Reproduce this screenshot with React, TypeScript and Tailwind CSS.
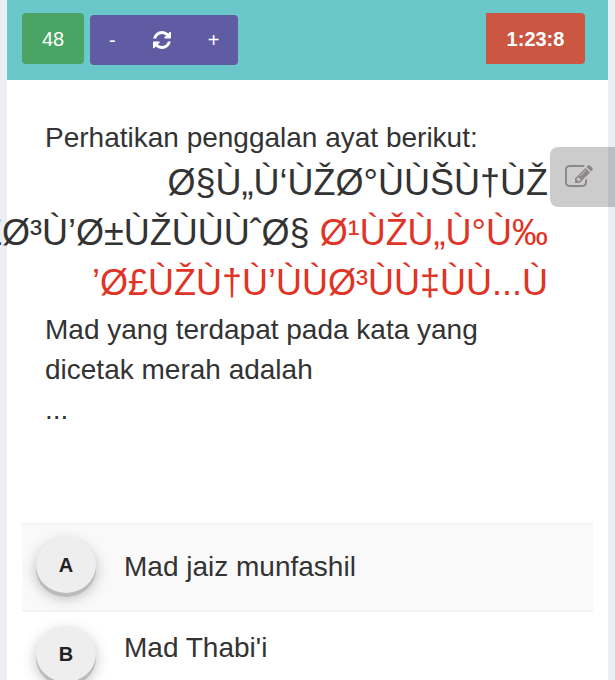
import { useState } from "react";

// Answer choices shown under the question
interface Option {
  key: string;
  text: string;
}

const options: Option[] = [
  { key: "A", text: "Mad jaiz munfashil" },
  { key: "B", text: "Mad Thabi'i" },
];

const RefreshIcon = () => (
  <svg viewBox="0 0 1536 1536" className="h-[18px] w-[18px]" fill="currentColor" aria-hidden="true">
    <path d="M1511 928q0 5-1 7-64 268-268 434.5t-478 166.5q-146 0-282.5-55t-243.5-157l-129 129q-19 19-45 19t-45-19-19-45v-448q0-26 19-45t45-19h448q26 0 45 19t19 45-19 45l-137 137q71 66 161 102t187 36q134 0 250-65t186-179q11-17 53-117 8-23 30-23h192q13 0 22.5 9.5t9.5 22.5zm25-800v448q0 26-19 45t-45 19h-448q-26 0-45-19t-19-45 19-45l138-138q-148-137-349-137-134 0-250 65t-186 179q-11 17-53 117-8 23-30 23h-199q-13 0-22.5-9.5t-9.5-22.5v-7q65-268 270-434.5t480-166.5q146 0 284 55.5t245 156.5l130-129q19-19 45-19t45 19 19 45z" />
  </svg>
);

const EditIcon = () => (
  <svg viewBox="0 0 1792 1792" className="h-7 w-7" fill="currentColor" aria-hidden="true">
    <path d="M888 1184l116-116-152-152-116 116v56h96v96h56zm440-720q-16-16-33 1l-350 350q-17 17-1 33t33-1l350-350q17-17 1-33zm80 594v190q0 119-84.5 203.5t-203.5 84.5h-832q-119 0-203.5-84.5t-84.5-203.5v-832q0-119 84.5-203.5t203.5-84.5h832q63 0 117 25 15 7 18 23 3 17-9 29l-49 49q-14 14-32 8-23-6-45-6h-832q-66 0-113 47t-47 113v832q0 66 47 113t113 47h832q66 0 113-47t47-113v-126q0-13 9-22l64-64q15-15 35-7t20 29zm-96-738l288 288-672 672h-288v-288zm444 132l-92 92-288-288 92-92q28-28 68-28t68 28l152 152q28 28 28 68t-28 68z" />
  </svg>
);

const Toolbar = () => (
  <header className="flex h-20 items-start justify-between bg-[#6ac8ca] pt-[13px] pr-[23px] pl-[15px] text-xl text-white">
    <div className="flex gap-1.5">
      <span className="flex h-[51px] w-[62px] items-center justify-center rounded bg-[#4aa564]">48</span>
      <div className="mt-0.5 flex h-[50px] rounded bg-[#605ca3]">
        <button type="button" aria-label="Smaller text" className="px-[19px]">
          -
        </button>
        <button type="button" aria-label="Reset text size" className="px-[18px]">
          <RefreshIcon />
        </button>
        <button type="button" aria-label="Larger text" className="px-[19px]">
          +
        </button>
      </div>
    </div>
    <span className="flex h-[51px] w-[99px] items-center justify-center rounded-r bg-[#cb5642] font-bold">
      1:23:8
    </span>
  </header>
);

const Question = () => (
  <section className="pt-[38px] pr-[60px] pl-[38px] text-[28px] leading-10">
    <p>Perhatikan penggalan ayat berikut:</p>
    {/* The verse is right aligned and runs off the left side when too long */}
    <div className="mb-0.5 text-4xl leading-[50px] whitespace-nowrap">
      <p className="flex justify-end">Ø§Ù„Ù‘ÙŽØ°ÙÙŠÙ†ÙŽ</p>
      <p className="flex justify-end">
        <span className="whitespace-pre">
          ŽØ³Ù’Ø±ÙŽÙÙÙˆØ§ <span className="text-[#e03426]">Ø¹ÙŽÙ„Ù°Ù‰</span>
        </span>
      </p>
      <p className="flex justify-end text-[#e03426]">’Ø£ÙŽÙ†Ù’ÙÙØ³ÙÙ‡ÙÙ...Ù</p>
    </div>
    <p className="max-w-[460px]">Mad yang terdapat pada kata yang dicetak merah adalah</p>
    <p>...</p>
  </section>
);

export default function App() {
  const [answer, setAnswer] = useState("");

  return (
    <div className="h-screen overflow-hidden bg-[#eceef4] pr-[7px] pl-[7px] font-['Liberation_Sans',Arial,sans-serif] text-[#333]">
      <main className="min-h-full bg-white">
        <Toolbar />
        <Question />

        {/* Answers */}
        <div role="radiogroup" aria-label="Jawaban" className="mt-[93px] mr-[15px] ml-[15px]">
          {options.map((option) => (
            <label
              key={option.key}
              className="group flex h-[89px] cursor-pointer items-start gap-7 px-3.5 pt-3.5 odd:border-y-2 odd:border-[#f3f3f3] odd:bg-[#f9f9f9] odd:pt-3"
            >
              <input
                type="radio"
                name="answer"
                value={option.key}
                checked={answer === option.key}
                onChange={() => setAnswer(option.key)}
                className="peer sr-only"
              />
              <span className="flex h-14 w-[60px] shrink-0 items-center justify-center rounded-[50%] bg-[#eee] text-xl font-bold text-[#222] shadow-[0_4px_0_#bbb,0_5px_14px_rgba(0,0,0,0.25)] peer-checked:bg-[#4aa564] peer-checked:text-white">
                {option.key}
              </span>
              <span className="pt-0.5 text-[28px] leading-10 group-odd:pt-2.5">{option.text}</span>
            </label>
          ))}
        </div>
      </main>

      {/* Notes tab that floats over the page edge */}
      <button
        type="button"
        aria-label="Notes"
        className="absolute top-[147px] right-0 flex h-[60px] w-[65px] items-center rounded-l-lg bg-black/20 pl-[15px] text-[#8e8888]"
      >
        <EditIcon />
      </button>
    </div>
  );
}
